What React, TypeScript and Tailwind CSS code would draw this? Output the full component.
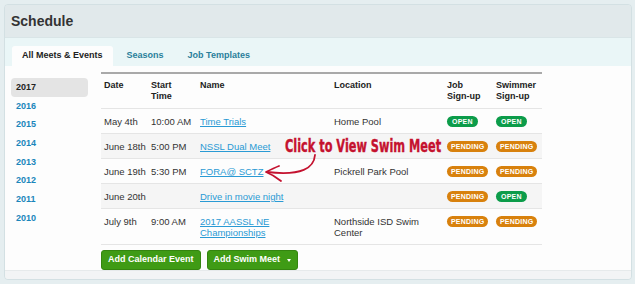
import React from "react";

type Status = "open" | "pending";

interface MeetRow {
  date: string;
  time: string;
  name: string[];
  location: string[];
  job: Status;
  swimmer: Status;
}

const rows: MeetRow[] = [
  { date: "May 4th", time: "10:00 AM", name: ["Time Trials"], location: ["Home Pool"], job: "open", swimmer: "open" },
  { date: "June 18th", time: "5:00 PM", name: ["NSSL Dual Meet"], location: [], job: "pending", swimmer: "pending" },
  { date: "June 19th", time: "5:30 PM", name: ["FORA@ SCTZ"], location: ["Pickrell Park Pool"], job: "pending", swimmer: "pending" },
  { date: "June 20th", time: "", name: ["Drive in movie night"], location: [], job: "pending", swimmer: "open" },
  { date: "July 9th", time: "9:00 AM", name: ["2017 AASSL NE", "Championships"], location: ["Northside ISD Swim", "Center"], job: "pending", swimmer: "pending" },
];

const years = ["2017", "2016", "2015", "2014", "2013", "2012", "2011", "2010"];

const Badge = ({ status }: { status: Status }) => (
  <div className="flex h-[11px] items-center">
    {status === "open" ? (
      <span className="flex h-[11px] items-center rounded-full bg-[#0c9c4a] px-[5px] text-[7px] font-bold leading-none tracking-[0.2px] text-white">
        OPEN
      </span>
    ) : (
      <span className="flex h-[11px] items-center rounded-full bg-[#d8810d] px-[4px] text-[7px] font-bold leading-none tracking-[0.2px] text-white">
        PENDING
      </span>
    )}
  </div>
);

export default function App() {
  return (
    <div
      className="relative h-[284px] w-[635px] bg-[#e5eef0] pb-[4px] pl-[4px] pr-[3px] pt-[4px] text-[#333]"
      style={{ fontFamily: '"Liberation Sans", Arial, sans-serif' }}
    >
      <div className="flex h-full flex-col overflow-hidden rounded-[4px] border border-[#d3e0e3]">
        {/* header */}
        <div className="flex h-[32px] shrink-0 items-center bg-[#e1e9eb] px-[6px]">
          <h1 className="text-[14px] font-bold text-[#333]">Schedule</h1>
        </div>

        {/* tabs */}
        <div className="flex h-[29px] shrink-0 items-end gap-[4px] border-t border-[#d9e5e7] bg-[#eaf6f7] pl-[7px]">
          <div className="flex h-[20px] items-center rounded-t-[3px] bg-[#fdfdfd] px-[10px] text-[9px] font-bold text-[#222]">
            All Meets &amp; Events
          </div>
          <div className="flex h-[20px] items-center px-[10px] text-[9px] font-bold text-[#2b7f9b]">Seasons</div>
          <div className="flex h-[20px] items-center px-[10px] text-[9px] font-bold text-[#2b7f9b]">Job Templates</div>
        </div>

        {/* content */}
        <div className="flex min-h-0 flex-1 bg-[#fdfdfd] pl-[6px] pt-[6px]">
          <div className="w-[77px] pt-[6px]">
            {years.map((y, i) =>
              i === 0 ? (
                <div key={y} className="flex h-[19px] items-center rounded-[4px] bg-[#e4e4e4] px-[5px] text-[9px] font-bold text-[#222]">
                  {y}
                </div>
              ) : (
                <div key={y} className="flex h-[18.7px] items-center px-[5px] text-[9px] font-bold text-[#1a86bb]">
                  {y}
                </div>
              )
            )}
          </div>

          <div className="ml-[13px] w-[441px]">
            <table className="w-full table-fixed border-collapse border-t-2 border-[#a9a9a9]">
              <colgroup>
                <col className="w-[47px]" />
                <col className="w-[49px]" />
                <col className="w-[134px]" />
                <col className="w-[113px]" />
                <col className="w-[49px]" />
                <col className="w-[49px]" />
              </colgroup>
              <thead>
                <tr className="border-b border-[#e5e5e5] text-left align-top text-[9px] font-bold leading-[11px] text-[#222]">
                  <th className="px-[3px] pb-[6px] pt-[6px]">Date</th>
                  <th className="px-[3px] pb-[6px] pt-[6px]">Start<br />Time</th>
                  <th className="px-[3px] pb-[6px] pt-[6px]">Name</th>
                  <th className="px-[3px] pb-[6px] pt-[6px]">Location</th>
                  <th className="px-[3px] pb-[6px] pt-[6px]">Job<br />Sign-up</th>
                  <th className="whitespace-nowrap px-[3px] pb-[6px] pt-[6px]">Swimmer<br />Sign-up</th>
                </tr>
              </thead>
              <tbody>
                {rows.map((r, i) => (
                  <tr
                    key={r.date}
                    className={`border-b border-[#e5e5e5] align-top text-[9.5px] leading-[11px] ${i % 2 === 1 ? "bg-[#f5f5f5]" : ""}`}
                  >
                    <td className="whitespace-nowrap px-[3px] pb-[6px] pt-[7px]">{r.date}</td>
                    <td className="whitespace-nowrap px-[3px] pb-[6px] pt-[7px]">{r.time}</td>
                    <td className="px-[3px] pb-[6px] pt-[7px]">
                      {r.name.map((n) => (
                        <div key={n}>
                          <a className="text-[#2a9ad4] underline">{n}</a>
                        </div>
                      ))}
                    </td>
                    <td className="px-[3px] pb-[6px] pt-[7px]">
                      {r.location.map((n) => (
                        <div key={n}>{n}</div>
                      ))}
                    </td>
                    <td className="px-[3px] pb-[6px] pt-[7px]">
                      <Badge status={r.job} />
                    </td>
                    <td className="px-[3px] pb-[6px] pt-[7px]">
                      <Badge status={r.swimmer} />
                    </td>
                  </tr>
                ))}
              </tbody>
            </table>

            <div className="mt-[5px] flex gap-[6px]">
              <button className="h-[20px] rounded-[3px] border border-[#34850f] bg-[#3f9b15] px-[6px] text-[9px] font-bold text-white">
                Add Calendar Event
              </button>
              <button className="flex h-[20px] items-center rounded-[3px] border border-[#34850f] bg-[#3f9b15] px-[6px] text-[9px] font-bold text-white">
                Add Swim Meet
                <span className="ml-[7px] inline-block border-x-[2.5px] border-t-[3px] border-x-transparent border-t-white" />
              </button>
            </div>
          </div>
        </div>

        {/* footer */}
        <div className="h-[9px] shrink-0 border-t border-[#e6eaeb] bg-[#f2f4f5]" />
      </div>

      {/* annotation */}
      <div
        className="absolute left-[285px] top-[136px] origin-left scale-x-[0.74] whitespace-nowrap text-[17px] font-bold leading-[20px] text-[#c4122f] [-webkit-text-stroke:0.4px_#c4122f]"
        style={{ fontFamily: '"DejaVu Sans Condensed", "Liberation Sans", sans-serif', fontStretch: "condensed", textShadow: "0 0 2px #fff, 0 0 2px #fff" }}
      >
        Click to View Swim Meet
      </div>
      <svg className="absolute left-[255px] top-[150px] h-[36px] w-[70px]" viewBox="255 150 70 36" fill="none">
        <path d="M315 155 C314 168 302 176 267 172" stroke="#c4122f" strokeWidth="1.8" strokeLinecap="round" />
        <path d="M279 166 C274 168 270 170 266 172 C271 174 276 177 281 181" stroke="#c4122f" strokeWidth="1.8" strokeLinecap="round" strokeLinejoin="round" />
      </svg>
    </div>
  );
}
